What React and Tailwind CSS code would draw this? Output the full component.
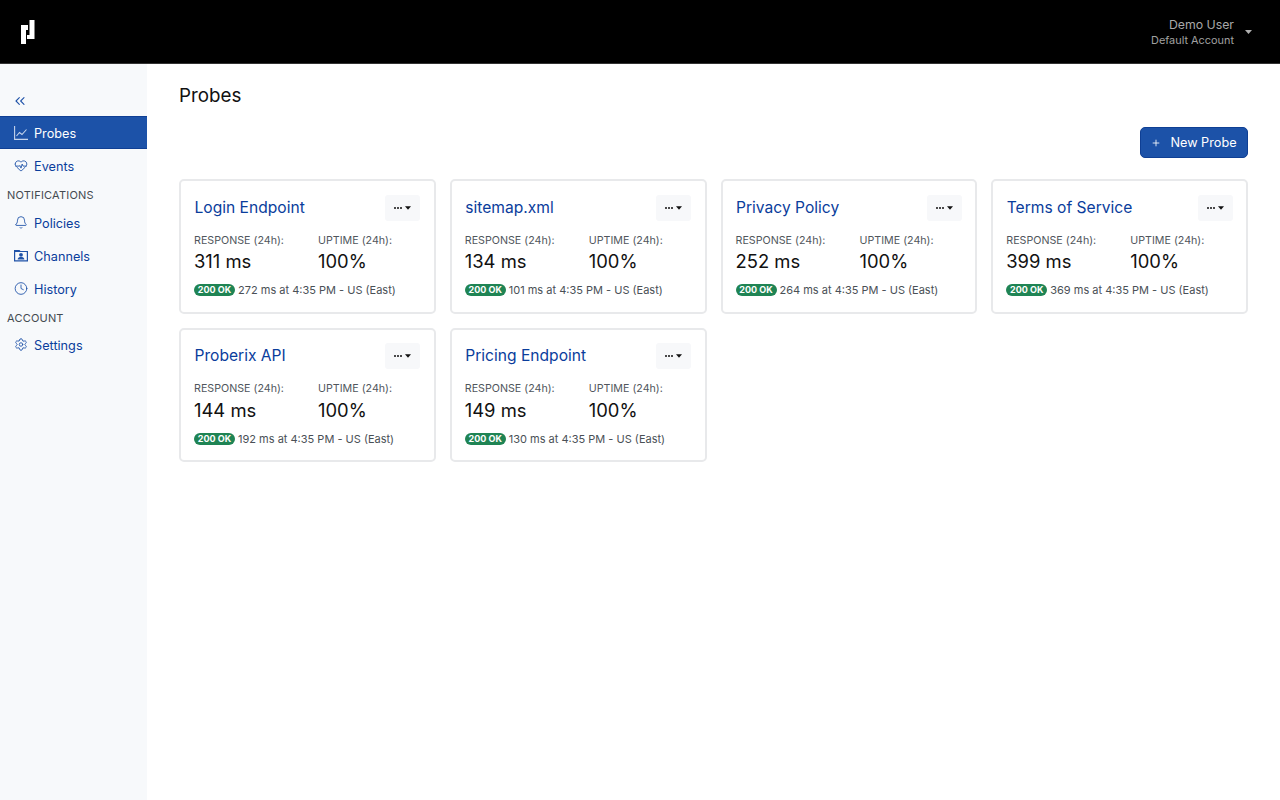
import React from "react";
import { ChevronsLeft, Bell, Clock, Settings, Plus, HeartPulse } from "lucide-react";

const font = { fontFamily: "Inter, sans-serif" };

const LogoMark = () => (
  <svg width="14" height="24" viewBox="0 0 14 24" fill="#fff">
    <path d="M0 5h7v5H5v14H0z" />
    <path d="M8.5 0h5v19H6v-4h2.5z" />
  </svg>
);

const ChartIcon = () => (
  <svg width="14" height="14" viewBox="0 0 14 14" fill="none" stroke="currentColor" strokeWidth="1.1">
    <path d="M.6 0v13.4H14" />
    <path d="M2.5 10l3-3.5 2.5 2L12.5 3.5" />
  </svg>
);

const ChannelsIcon = () => (
  <svg width="14" height="13" viewBox="0 0 14 13" fill="currentColor">
    <path fillRule="evenodd" d="M0 1h5.5l1 1H14v10.5H0zM1.2 3v8.3h11.6V3z" />
    <circle cx="7" cy="5.8" r="1.9" />
    <path d="M3.6 10.6c.3-1.9 1.7-2.5 3.4-2.5s3.1.6 3.4 2.5z" />
  </svg>
);

const Caret = ({ className }) => (
  <svg width="7" height="4" viewBox="0 0 7 4" fill="currentColor" className={className}>
    <path d="M0 0h7L3.5 4z" />
  </svg>
);

const NavItem = ({ icon, label, active }) => (
  <div
    className={
      "flex items-center h-[33px] pl-[14px] gap-[6px] text-[12.7px] " +
      (active ? "bg-[#1c52a8] text-white border-y border-[#0f3f94]" : "text-[#0a3d9c]")
    }
  >
    <span className={"w-[14px] flex justify-center " + (active ? "text-[#c5d4ec]" : "text-[#1f52a8]")}>{icon}</span>
    <span className="pt-[2px]">{label}</span>
  </div>
);

const Section = ({ children, className }) => (
  <div className={"pl-[7px] flex items-center text-[11px] tracking-[0.2px] text-[#444a50] " + className}>{children}</div>
);

const ProbeCard = ({ name, response, last }) => (
  <div className="h-[134.5px] rounded-[5px] border-2 border-[#e8e9eb] bg-white pl-[13.5px] pr-[13.5px] pt-[13.5px]">
    <div className="flex items-start justify-between h-[26px]">
      <div className="text-[15.6px] leading-[26px] text-[#0a3d9c]">{name}</div>
      <div className="w-[35px] h-[26px] rounded-[3px] bg-[#f7f8fa] flex items-center justify-center gap-[3px] text-[#111]">
        <span className="flex gap-[1px]">
          <span className="w-[2px] h-[2px] bg-[#111] rounded-full"></span>
          <span className="w-[2px] h-[2px] bg-[#111] rounded-full"></span>
          <span className="w-[2px] h-[2px] bg-[#111] rounded-full"></span>
        </span>
        <Caret className="w-[6px]" />
      </div>
    </div>
    <div className="flex mt-[13px] -ml-[0.5px]">
      <div className="w-[124px]">
        <div className="text-[10.7px] leading-[14px] text-[#50565c]">RESPONSE (24h):</div>
        <div className="text-[18.4px] leading-[24px] text-[#111] mt-[1.5px]">{response} ms</div>
      </div>
      <div>
        <div className="text-[10.7px] leading-[14px] text-[#50565c]">UPTIME (24h):</div>
        <div className="text-[18.4px] leading-[24px] text-[#111] mt-[1.5px]">100%</div>
      </div>
    </div>
    <div className="flex items-center gap-[3px] mt-[10px] -ml-[0.5px] text-[11px] leading-[14px] text-[#4a5056]">
      <span className="h-[12px] w-[41px] rounded-full bg-[#1f8454] text-white text-[9px] font-bold flex items-center justify-center">200 OK</span>
      <span>{last} ms at 4:35 PM - US (East)</span>
    </div>
  </div>
);

const probes = [
  ["Login Endpoint", 311, 272],
  ["sitemap.xml", 134, 101],
  ["Privacy Policy", 252, 264],
  ["Terms of Service", 399, 369],
  ["Proberix API", 144, 192],
  ["Pricing Endpoint", 149, 130],
];

export default function App() {
  return (
    <div className="w-[1280px] h-[800px] flex flex-col bg-white overflow-hidden" style={font}>
      <header className="h-[64px] shrink-0 bg-black border-b border-[#333] flex items-center justify-between pl-[21px] pr-[28px]">
        <LogoMark />
        <div className="flex items-center gap-[11px]">
          <div className="text-right pt-[1px]">
            <div className="text-[12.3px] leading-[17px] text-[#a8a8a8]">Demo User</div>
            <div className="text-[10.9px] leading-[15px] text-[#a0a0a0]">Default Account</div>
          </div>
          <Caret className="text-[#b0b0b0]" />
        </div>
      </header>
      <div className="flex flex-1 min-h-0">
        <aside className="w-[147px] shrink-0 bg-[#f7f9fb]">
          <div className="h-[52px] pl-[12px] pt-[29px] text-[#1f52a8]">
            <ChevronsLeft size={16} strokeWidth={1.6} />
          </div>
          <NavItem active icon={<ChartIcon />} label="Probes" />
          <NavItem icon={<HeartPulse size={15} strokeWidth={1.5} />} label="Events" />
          <Section className="h-[24px] pt-[3px]">NOTIFICATIONS</Section>
          <NavItem icon={<Bell size={15} strokeWidth={1.5} />} label="Policies" />
          <NavItem icon={<ChannelsIcon />} label="Channels" />
          <NavItem icon={<Clock size={15} strokeWidth={1.5} />} label="History" />
          <Section className="h-[23px] pt-[4px]">ACCOUNT</Section>
          <NavItem icon={<Settings size={15} strokeWidth={1.5} />} label="Settings" />
        </aside>
        <main className="flex-1 pl-[32px] pr-[32px]">
          <h1 className="text-[18.8px] leading-[24px] text-[#111] mt-[20px]">Probes</h1>
          <div className="flex justify-end mt-[19px]">
            <button className="w-[108px] h-[31px] rounded-[5px] bg-[#1c52a8] border border-[#0f3f94] text-white text-[12.7px] flex items-center justify-center gap-[9px]">
              <Plus size={10} strokeWidth={2} />
              <span>New Probe</span>
            </button>
          </div>
          <div className="grid grid-cols-4 gap-x-[14px] gap-y-[14px] mt-[21px]">
            {probes.map(([n, r, l]) => (
              <ProbeCard key={n} name={n} response={r} last={l} />
            ))}
          </div>
        </main>
      </div>
    </div>
  );
}
